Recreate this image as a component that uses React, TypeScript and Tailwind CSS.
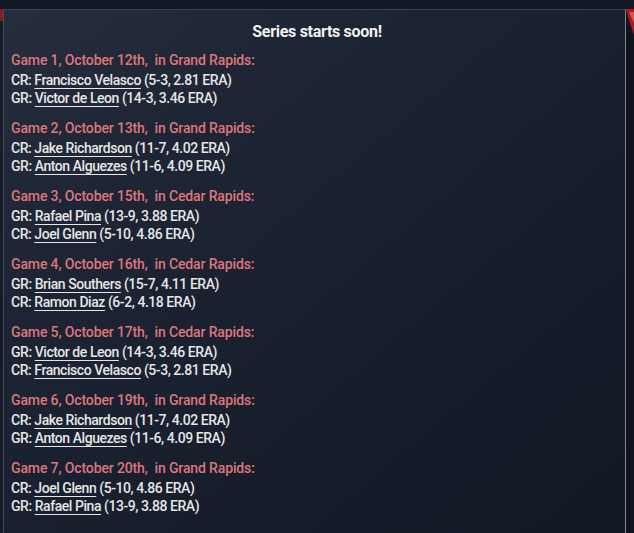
import React from "react";

type Line = { team: string; name: string; stats: string };
type Game = { title: string; lines: Line[] };

const games: Game[] = [
  { title: "Game 1, October 12th,  in Grand Rapids:", lines: [
    { team: "CR", name: "Francisco Velasco", stats: "(5-3, 2.81 ERA)" },
    { team: "GR", name: "Victor de Leon", stats: "(14-3, 3.46 ERA)" },
  ]},
  { title: "Game 2, October 13th,  in Grand Rapids:", lines: [
    { team: "CR", name: "Jake Richardson", stats: "(11-7, 4.02 ERA)" },
    { team: "GR", name: "Anton Alguezes", stats: "(11-6, 4.09 ERA)" },
  ]},
  { title: "Game 3, October 15th,  in Cedar Rapids:", lines: [
    { team: "GR", name: "Rafael Pina", stats: "(13-9, 3.88 ERA)" },
    { team: "CR", name: "Joel Glenn", stats: "(5-10, 4.86 ERA)" },
  ]},
  { title: "Game 4, October 16th,  in Cedar Rapids:", lines: [
    { team: "GR", name: "Brian Southers", stats: "(15-7, 4.11 ERA)" },
    { team: "CR", name: "Ramon Diaz", stats: "(6-2, 4.18 ERA)" },
  ]},
  { title: "Game 5, October 17th,  in Cedar Rapids:", lines: [
    { team: "GR", name: "Victor de Leon", stats: "(14-3, 3.46 ERA)" },
    { team: "CR", name: "Francisco Velasco", stats: "(5-3, 2.81 ERA)" },
  ]},
  { title: "Game 6, October 19th,  in Grand Rapids:", lines: [
    { team: "CR", name: "Jake Richardson", stats: "(11-7, 4.02 ERA)" },
    { team: "GR", name: "Anton Alguezes", stats: "(11-6, 4.09 ERA)" },
  ]},
  { title: "Game 7, October 20th,  in Grand Rapids:", lines: [
    { team: "CR", name: "Joel Glenn", stats: "(5-10, 4.86 ERA)" },
    { team: "GR", name: "Rafael Pina", stats: "(13-9, 3.88 ERA)" },
  ]},
];

export default function App() {
  return (
    <div className="w-[634px] h-[533px] overflow-hidden bg-[#111722] flex flex-col font-['Roboto',sans-serif]">
      <div className="h-[9px] shrink-0 bg-[#121824]" />
      <div className="flex flex-1 min-h-0">
        <div className="w-[3px] shrink-0 flex flex-col">
          <div className="h-[12px] bg-[#8a1a1f]" />
          <div className="flex-1 bg-[#151b27]" />
        </div>
        <div className="flex-1 border-l border-t border-r border-l-[#444b5a] border-t-[#3a4150] border-r-[#80868f] bg-[linear-gradient(140deg,#262e3e_0%,#1e2534_25%,#1a2130_45%,#151b28_75%,#121824_100%)] flex flex-col">
          <div className="pt-[11px] pl-[5px] h-[41px] text-center text-[16px] leading-[22px] font-bold tracking-[-0.3px] text-[#f2f2f2]">
            Series starts soon!
          </div>
          <div className="pl-[7px] flex flex-col">
            {games.map((g) => (
              <div key={g.title} className="mb-[12px]">
                <div className="h-[20px] leading-[19px] text-[14px] font-medium tracking-[-0.13px] text-[#de767c] whitespace-pre">{g.title}</div>
                {g.lines.map((l) => (
                  <div key={l.team + l.name} className="h-[18px] leading-[18px] text-[14px] font-medium tracking-[-0.45px] text-[#e6e6e6] whitespace-pre">
                    {l.team}: <span className="underline underline-offset-[3px] decoration-1">{l.name}</span> {l.stats}
                  </div>
                ))}
              </div>
            ))}
          </div>
        </div>
        <div className="w-[8px] shrink-0 flex flex-col bg-[#0f141e]">
          <svg width="8" height="30" viewBox="0 0 8 30">
            <path d="M0 0 L8 0 L8 26 L2 8 Z" fill="#b3161d" />
            <path d="M3 3 L8 3 L8 14 Z" fill="#d8868a" opacity="0.6" />
          </svg>
        </div>
      </div>
    </div>
  );
}
